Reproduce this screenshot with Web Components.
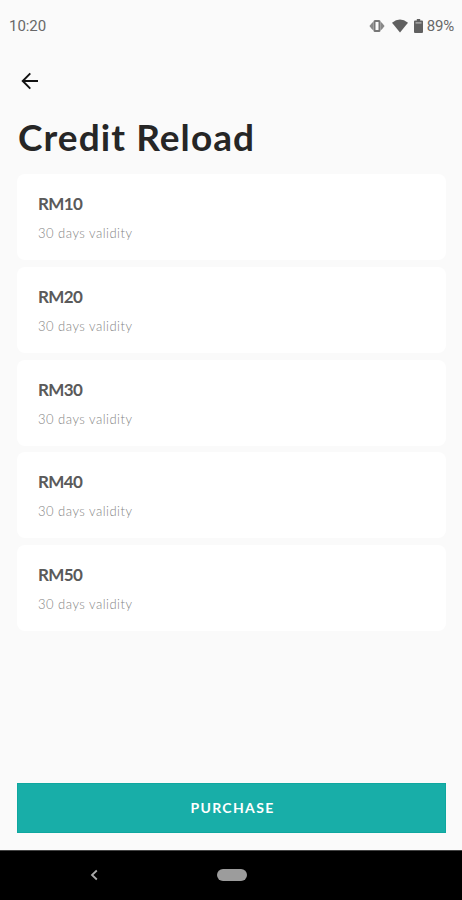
<!DOCTYPE html>
<html lang="en">
<head>
<meta charset="utf-8">
<title>Credit Reload</title>
<style>
html, body { margin: 0; height: 100%; background: #fafafa; }
body { font-family: Lato, "Open Sans", sans-serif; }
</style>
</head>
<body>
<reload-screen></reload-screen>
<script>
function define(name, html) {
  const template = document.createElement('template');
  template.innerHTML = html;
  customElements.define(name, class extends HTMLElement {
    constructor() {
      super();
      this.attachShadow({ mode: 'open' }).append(template.content.cloneNode(true));
    }
  });
}

define('status-bar', `
<style>
:host { display: flex; box-sizing: border-box; height: 52px; padding: 0 8px 0 9px; align-items: center; color: #686868; font: 15px/20px Roboto, sans-serif; }
.time { flex: 1; letter-spacing: -.05px; }
svg { display: block; fill: #606060; }
.vibrate { margin-right: 7px; }
.wifi { margin-right: 6px; }
.battery { margin-right: 4px; }
.level { letter-spacing: -.2px; }
</style>
<span class="time"><slot name="time"></slot></span>
<svg class="vibrate" width="16" height="14" viewBox="0 0 16 14"><path fill="#777" fill-rule="evenodd" d="M6 1h4q1.500 0 1.500 1.500v9Q11.500 13 10 13H6q-1.500 0-1.500-1.500v-9Q4.500 1 6 1zM6.500 3v8h3V3z"/><path fill="#888" d="M4.500 2.500v9Q2.500 10 .4 7 2.500 4 4.500 2.500zM11.500 2.500v9Q13.500 10 15.600 7 13.500 4 11.500 2.500z"/></svg>
<svg class="wifi" width="16" height="14" viewBox="0 0 16 14"><path d="M0 3.8Q8-3 16 3.8L8 13.6z"/></svg>
<svg class="battery" width="9" height="14" viewBox="0 0 9 14"><path d="M2.8 0h3.4v1.5H8q1 0 1 1V13q0 1-1 1H1q-1 0-1-1V2.500q0-1 1-1h1.800z"/><path d="M1.500 3.300h6v1.200h-6z" fill="#bbb"/></svg>
<span class="level"><slot name="level"></slot></span>`);

define('back-button', `
<style>
:host { display: flex; height: 57px; padding-left: 21px; align-items: center; }
svg { display: block; }
</style>
<svg width="18" height="18" viewBox="0 0 18 18" fill="none" stroke="#111" stroke-width="1.9"><path d="M17 9H2M9.300 1.300L1.700 9l7.600 7.700"/></svg>`);

define('page-title', `
<style>
:host { display: block; height: 65px; padding-left: 18px; box-sizing: border-box; color: #262626; }
h1 { margin: 0; padding-top: 6px; font-size: 37px; line-height: 44px; font-weight: 700; letter-spacing: 1.08px; white-space: nowrap; }
</style>
<h1><slot></slot></h1>`);

define('credit-option', `
<style>
:host { display: block; box-sizing: border-box; height: 86px; padding: 20px 21px 0; border-radius: 8px; background: #fff; }
.amount { font-size: 17px; line-height: 20px; font-weight: 700; color: #5a5a5a; letter-spacing: -.65px; }
.validity { margin-top: 10px; font-size: 13px; line-height: 18px; font-weight: 300; color: #858585; letter-spacing: .49px; }
</style>
<div class="amount"><slot></slot></div>
<div class="validity"><slot name="validity"></slot></div>`);

define('option-list', `
<style>
:host { display: flex; flex-direction: column; gap: 6.8px; padding: 0 16px 0 17px; }
</style>
<slot></slot>`);

define('action-button', `
<style>
:host { display: block; margin: auto 16px 17px 17px; }
button { display: flex; width: 100%; height: 50px; padding: 0 0 0 2px; border: 1px solid #0fa79f; align-items: center; justify-content: center; background: #18aea8; color: #fff; font: 700 14px/20px Lato, sans-serif; letter-spacing: 1.35px; }
</style>
<button><slot></slot></button>`);

define('system-nav', `
<style>
:host { display: grid; grid-template-columns: 188px 87px 187px; height: 50px; align-items: center; justify-items: center; background: #000; box-sizing: border-box; border-top: 1px solid #444; padding-bottom: 1px; }
svg { display: block; }
.home { width: 30px; height: 12px; border-radius: 6px; background: #9c9c9c; }
</style>
<svg width="8" height="12" viewBox="0 0 8 12" fill="none" stroke="#aaa" stroke-width="1.800"><path d="M6.800 1.500L2 6l4.800 4.500"/></svg>
<span class="home"></span>`);

define('reload-screen', `
<style>
:host { display: flex; flex-direction: column; width: 462px; height: 900px; background: #fafafa; overflow: hidden; }
</style>
<status-bar><span slot="time">10:20</span><span slot="level">89%</span></status-bar>
<back-button></back-button>
<page-title>Credit Reload</page-title>
<option-list>
${[10, 20, 30, 40, 50].map(n => `<credit-option>RM${n}<span slot="validity">30 days validity</span></credit-option>`).join('')}
</option-list>
<action-button>PURCHASE</action-button>
<system-nav></system-nav>`);
</script>
</body>
</html>
